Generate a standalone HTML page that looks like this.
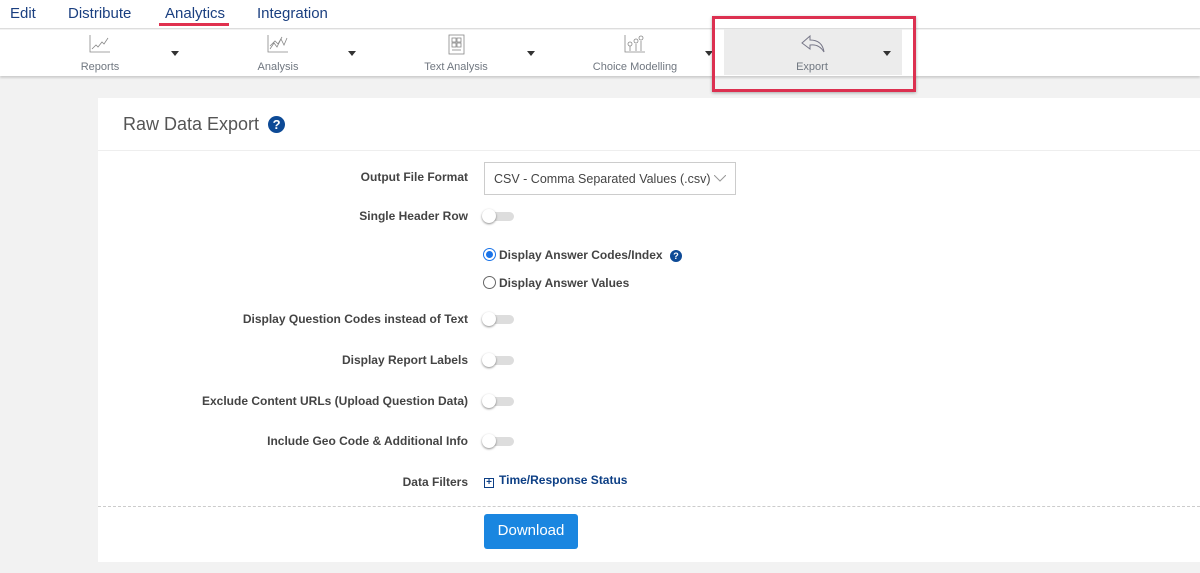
<!DOCTYPE html>
<html><head><style>
*{margin:0;padding:0;box-sizing:border-box}
body{width:1200px;height:573px;background:#f2f2f2;font-family:"Liberation Sans",sans-serif;position:relative;overflow:hidden}
.top{position:absolute;left:0;top:0;width:1200px;height:29px;background:#fff;border-bottom:1px solid #ddd}
.top span{position:absolute;top:5px;font-size:15px;color:#1a3f80}
.tb{position:absolute;left:0;top:30px;width:1200px;height:46px;background:#fff;box-shadow:0 2px 2px rgba(0,0,0,.15)}
.ti{position:absolute;top:0;height:46px;text-align:center;font-size:11px;color:#707780}
.ti .l{position:absolute;top:31px;width:100%}
.ti svg{position:absolute;top:4px}
.car{position:absolute;top:21px;width:0;height:0;border-left:4px solid transparent;border-right:4px solid transparent;border-top:5px solid #333}
.card{position:absolute;left:98px;top:98px;width:1102px;height:464px;background:#fff}
.h{position:absolute;left:25px;top:16px;font-size:18px;color:#555}
.hl{position:absolute;left:0;top:52px;width:100%;border-top:1px solid #eee}
.lab{position:absolute;right:732px;font-size:12px;font-weight:bold;color:#444;white-space:nowrap}
.tog{position:absolute;left:384px;width:34px;height:12px}
.tog .t{position:absolute;left:4px;top:2px;width:28px;height:9px;border-radius:5px;background:#ddd}
.tog .k{position:absolute;left:0;top:-1px;width:14px;height:14px;border-radius:50%;background:#fff;box-shadow:0 1px 2px rgba(0,0,0,.45)}
.q{display:inline-block;width:12px;height:12px;border-radius:50%;background:#0d4a96;color:#fff;font-size:9px;font-weight:bold;text-align:center;line-height:12px;vertical-align:middle}
</style></head><body>
<div class="top">
<span style="left:10px">Edit</span>
<span style="left:68px">Distribute</span>
<span style="left:165px">Analytics</span>
<div style="position:absolute;left:159px;top:23px;width:70px;height:3px;background:#e0304e"></div>
<span style="left:257px">Integration</span>
</div>
<div class="tb">
<div class="ti" style="left:60px;width:80px"><svg style="left:29px" width="22" height="20" viewBox="0 0 22 20" fill="none" stroke="#888" stroke-width=".8"><path d="M1 1V18H21M3 15L7 11L9 13L13 8L15 10L19 4"/></svg><div class="l">Reports</div></div>
<div class="car" style="left:171px"></div>
<div class="ti" style="left:238px;width:80px"><svg style="left:29px" width="22" height="20" viewBox="0 0 22 20" fill="none" stroke="#888" stroke-width=".8"><path d="M1 1V18H21M3 15L7 9L10 13L14 5L17 11L20 4M3 12L8 7L11 10L15 3"/></svg><div class="l">Analysis</div></div>
<div class="car" style="left:348px"></div>
<div class="ti" style="left:416px;width:80px"><svg style="left:30px" width="20" height="22" viewBox="0 0 20 22" fill="none" stroke="#888" stroke-width=".8"><rect x="3" y="1" width="15" height="19"/><rect x="6" y="4" width="4" height="4"/><rect x="11" y="4" width="4" height="4"/><rect x="6" y="9" width="4" height="4"/><rect x="11" y="9" width="4" height="4"/><path d="M6 16H15"/></svg><div class="l">Text Analysis</div></div>
<div class="car" style="left:527px"></div>
<div class="ti" style="left:585px;width:100px"><svg style="left:39px" width="22" height="20" viewBox="0 0 22 20" fill="none" stroke="#888" stroke-width=".8"><path d="M1 1V18H21M6 17V12M12 17V10M17 17V7"/><circle cx="6" cy="10" r="2"/><circle cx="12" cy="7" r="2"/><circle cx="17" cy="4" r="2"/></svg><div class="l">Choice Modelling</div></div>
<div class="car" style="left:705px"></div>
<div style="position:absolute;left:724px;top:-1px;width:178px;height:46px;background:#ececec"></div>
<div class="ti" style="left:772px;width:80px"><svg style="left:28px" width="26" height="20" viewBox="0 0 26 20" fill="none" stroke="#778" stroke-width="1"><path d="M10 2L2 9L10 15V11C17 10 21 13 24 18C23 11 19 6 10 6Z"/></svg><div class="l">Export</div></div>
<div class="car" style="left:883px"></div>
</div>
<div style="position:absolute;left:712px;top:16px;width:204px;height:76px;border:3px solid #dc3050;box-shadow:0 1px 3px rgba(0,0,0,.3)"></div>
<div class="card">
<div class="h">Raw Data Export <span class="q" style="width:17px;height:17px;line-height:17px;font-size:13px;margin-left:4px;vertical-align:1px">?</span></div>
<div class="hl"></div>
<div class="lab" style="top:72px">Output File Format</div>
<div style="position:absolute;left:386px;top:64px;width:252px;height:33px;border:1px solid #ccc;font-size:12.5px;color:#444;padding:9px 0 0 9px;white-space:nowrap">CSV - Comma Separated Values (.csv)<svg style="position:absolute;left:229px;top:12px" width="12" height="7" viewBox="0 0 12 7" fill="none" stroke="#999"><path d="M0 0L6 6L12 0"/></svg></div>
<div class="lab" style="top:111px">Single Header Row</div>
<div class="tog" style="top:112px"><div class="t"></div><div class="k"></div></div>
<div style="position:absolute;left:385px;top:150px;font-size:12px;font-weight:bold;color:#444"><span style="display:inline-block;width:13px;height:13px;border-radius:50%;border:1px solid #1a73e8;vertical-align:-2px;margin-right:3px;position:relative"><span style="position:absolute;left:2px;top:2px;width:7px;height:7px;border-radius:50%;background:#1a73e8"></span></span>Display Answer Codes/Index <span class="q" style="margin-left:4px">?</span></div>
<div style="position:absolute;left:385px;top:178px;font-size:12px;font-weight:bold;color:#444"><span style="display:inline-block;width:13px;height:13px;border-radius:50%;border:1px solid #666;vertical-align:-2px;margin-right:3px"></span>Display Answer Values</div>
<div class="lab" style="top:214px">Display Question Codes instead of Text</div>
<div class="tog" style="top:215px"><div class="t"></div><div class="k"></div></div>
<div class="lab" style="top:255px">Display Report Labels</div>
<div class="tog" style="top:256px"><div class="t"></div><div class="k"></div></div>
<div class="lab" style="top:296px">Exclude Content URLs (Upload Question Data)</div>
<div class="tog" style="top:297px"><div class="t"></div><div class="k"></div></div>
<div class="lab" style="top:336px">Include Geo Code &amp; Additional Info</div>
<div class="tog" style="top:337px"><div class="t"></div><div class="k"></div></div>
<div class="lab" style="top:377px">Data Filters</div>
<div style="position:absolute;left:386px;top:375px;font-size:12px;font-weight:bold;color:#0d3f85"><span style="display:inline-block;width:10px;height:10px;border:1px solid #0d3f85;font-size:10px;line-height:8px;text-align:center;vertical-align:-1px;margin-right:5px">+</span>Time/Response Status</div>
<div style="position:absolute;left:0;top:408px;width:100%;border-top:1px dashed #ccc"></div>
<div style="position:absolute;left:386px;top:416px;width:94px;height:35px;background:#1a86e0;border-radius:3px;color:#fff;font-size:15px;text-align:center;line-height:34px">Download</div>
</div>
</body></html>
